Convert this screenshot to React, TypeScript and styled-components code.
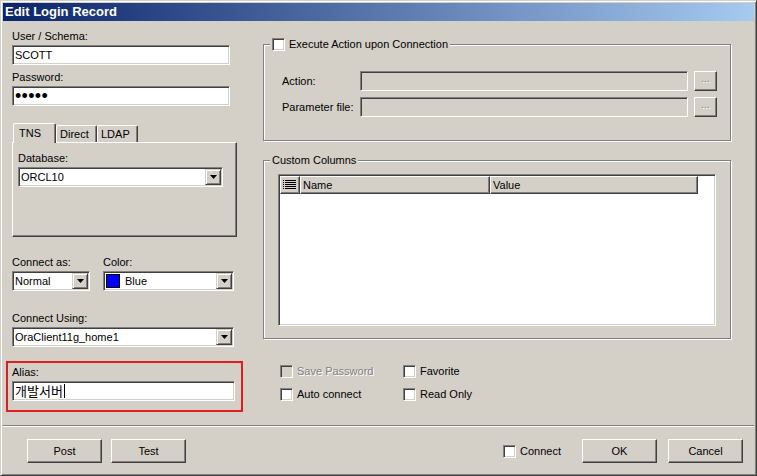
import React from "react";
import styled, { createGlobalStyle } from "styled-components";

const face = "#d4d0c8";
const shadow = "#808080";
const dark = "#404040";

const GlobalStyle = createGlobalStyle`
  html, body {
    margin: 0;
    padding: 0;
    background: ${face};
  }
  body {
    font-family: "Liberation Sans", Arial, sans-serif;
    font-size: 11px;
    color: #000;
  }
  * {
    box-sizing: border-box;
  }
`;

const Window = styled.div`
  width: 757px;
  height: 476px;
  background: ${face};
  border: 1px solid;
  border-color: ${face} ${dark} ${dark} ${face};
  box-shadow: inset 1px 1px #fff, inset -1px -1px ${shadow};
  padding: 2px;
  display: flex;
  flex-direction: column;
`;

const TitleBar = styled.div`
  height: 18px;
  padding-left: 2px;
  background: linear-gradient(90deg, #0a246a, #a6caf0);
  color: #fff;
  font-size: 13px;
  font-weight: bold;
  line-height: 18px;
`;

const Main = styled.div`
  flex: 1;
  display: flex;
`;

const LeftCol = styled.div`
  width: 260px;
  padding: 9px 0 0 9px;
  display: flex;
  flex-direction: column;
`;

const RightCol = styled.div`
  width: 468px;
  padding-top: 23px;
  display: flex;
  flex-direction: column;
`;

const Field = styled.div<{ $top?: number }>`
  margin-top: ${(p) => p.$top ?? 0}px;
  display: flex;
  flex-direction: column;
`;

const Label = styled.div`
  line-height: 13px;
  margin-bottom: 2px;
  white-space: nowrap;
`;

const Sunken = styled.div<{ $width?: number; $disabled?: boolean }>`
  width: ${(p) => (p.$width ? `${p.$width}px` : "auto")};
  height: 20px;
  background: ${(p) => (p.$disabled ? face : "#fff")};
  border: 1px solid;
  border-color: ${shadow} #fff #fff ${shadow};
  box-shadow: inset 1px 1px ${dark}, inset -1px -1px ${face};
  display: flex;
  align-items: center;
  padding: 0 2px;
  white-space: nowrap;
  overflow: hidden;
`;

const Input = styled(Sunken)`
  flex-shrink: 0;
`;

const Mask = styled.span`
  font-size: 18px;
  line-height: 16px;
  letter-spacing: 0.3px;
`;

const Hangul = styled.span`
  font-family: "Noto Sans CJK KR", "Liberation Sans", sans-serif;
  font-size: 13px;
  line-height: 16px;
`;

const Caret = styled.span`
  display: inline-block;
  width: 1px;
  height: 14px;
  margin-left: 1px;
  background: #000;
`;

const Combo = styled(Sunken)`
  padding: 0 1px 0 2px;
`;

const ComboText = styled.div`
  flex: 1;
  display: flex;
  align-items: center;
  line-height: 16px;
`;

const DropButton = styled.div`
  width: 16px;
  height: 16px;
  flex-shrink: 0;
  background: ${face};
  border: 1px solid;
  border-color: ${face} ${dark} ${dark} ${face};
  box-shadow: inset 1px 1px #fff, inset -1px -1px ${shadow};
  display: flex;
  align-items: center;
  justify-content: center;
`;

const Swatch = styled.span<{ $color: string }>`
  width: 14px;
  height: 14px;
  background: ${(p) => p.$color};
  border: 1px solid #000;
  margin-right: 5px;
`;

const Row = styled.div<{ $gap?: number }>`
  display: flex;
  gap: ${(p) => p.$gap ?? 0}px;
`;

const TabStrip = styled.div`
  margin-top: 17px;
  display: flex;
  align-items: flex-end;
  padding-left: 1px;
`;

const Tab = styled.div<{ $active?: boolean; $width: number }>`
  width: ${(p) => p.$width}px;
  height: ${(p) => (p.$active ? 20 : 17)}px;
  margin-bottom: ${(p) => (p.$active ? -1 : 0)}px;
  position: relative;
  z-index: ${(p) => (p.$active ? 1 : 0)};
  background: ${face};
  border: 1px solid;
  border-bottom: none;
  border-color: #fff ${dark} transparent #fff;
  border-radius: 2px 2px 0 0;
  box-shadow: inset -1px 0 ${shadow};
  padding: ${(p) => (p.$active ? "3px 0 0 5px" : "2px 0 0 3px")};
  line-height: 13px;
`;

const TabPanel = styled.div`
  width: 225px;
  height: 95px;
  border: 1px solid;
  border-color: #fff ${dark} ${dark} #fff;
  box-shadow: inset -1px -1px ${shadow};
  padding: 9px 0 0 5px;
`;

const Highlight = styled.div`
  margin: 14px 0 0 -6px;
  width: 237px;
  border: 2px solid #e01e1e;
  padding: 3px 0 9px 4px;
`;

const GroupBox = styled.div<{ $height: number; $top?: number }>`
  position: relative;
  height: ${(p) => p.$height}px;
  margin-top: ${(p) => p.$top ?? 0}px;
  border: 1px solid ${shadow};
  box-shadow: inset 1px 1px #fff, 1px 1px #fff;
`;

const Legend = styled.div`
  position: absolute;
  top: -7px;
  left: 6px;
  padding: 0 2px;
  background: ${face};
  display: flex;
  align-items: center;
  gap: 4px;
  line-height: 13px;
`;

const ActionRows = styled.div`
  padding: 26px 13px 0 18px;
  display: flex;
  flex-direction: column;
  gap: 6px;
`;

const RowLabel = styled.div`
  width: 78px;
  line-height: 20px;
`;

const SmallButton = styled.div`
  width: 23px;
  height: 20px;
  margin-left: 6px;
  border: 1px solid;
  border-color: #fff ${dark} ${dark} #fff;
  box-shadow: inset -1px -1px ${shadow};
  color: ${shadow};
  text-shadow: 1px 1px #fff;
  text-align: center;
  line-height: 14px;
  font-size: 10px;
`;

const ListArea = styled.div`
  margin: 13px 0 0 14px;
  width: 438px;
  height: 152px;
  background: #fff;
  border: 1px solid;
  border-color: ${shadow} #fff #fff ${shadow};
  box-shadow: inset 1px 1px ${dark}, inset -1px -1px ${face};
  padding: 1px 0 0 1px;
`;

const Header = styled.div`
  display: flex;
`;

const HeaderCell = styled.div<{ $width: number }>`
  width: ${(p) => p.$width}px;
  height: 18px;
  background: ${face};
  border: 1px solid;
  border-color: #fff ${dark} ${dark} #fff;
  box-shadow: inset -1px -1px ${shadow};
  padding-left: 2px;
  line-height: 15px;
  display: flex;
  align-items: center;
`;

const Checks = styled.div`
  margin-top: 26px;
  padding-left: 17px;
  display: grid;
  grid-template-columns: 123px auto;
  row-gap: 10px;
`;

const CheckRow = styled.label<{ $disabled?: boolean }>`
  display: flex;
  align-items: center;
  gap: 4px;
  line-height: 13px;
  color: ${(p) => (p.$disabled ? shadow : "#000")};
  text-shadow: ${(p) => (p.$disabled ? "1px 1px #fff" : "none")};
`;

const Box = styled.span<{ $disabled?: boolean }>`
  width: 13px;
  height: 13px;
  flex-shrink: 0;
  background: ${(p) => (p.$disabled ? face : "#fff")};
  border: 1px solid;
  border-color: ${shadow} #fff #fff ${shadow};
  box-shadow: inset 1px 1px ${dark}, inset -1px -1px ${face};
`;

const Footer = styled.div`
  height: 48px;
  border-top: 1px solid ${shadow};
  box-shadow: inset 0 1px #fff;
  padding: 13px 11px 0 24px;
  display: flex;
  align-items: flex-start;
`;

const Button = styled.button<{ $gapRight?: number }>`
  width: 75px;
  height: 24px;
  margin-right: ${(p) => p.$gapRight ?? 0}px;
  background: ${face};
  border: 1px solid;
  border-color: #fff ${dark} ${dark} #fff;
  box-shadow: inset -1px -1px ${shadow};
  font-family: inherit;
  font-size: 11px;
  color: #000;
  padding: 0;
`;

const Spacer = styled.div`
  flex: 1;
`;

const FooterCheck = styled(CheckRow)`
  margin-top: 6px;
  margin-right: 21px;
`;

const Arrow = () => (
  <svg width="7" height="4" viewBox="0 0 7 4">
    <polygon points="0,0 7,0 3.5,4" fill="#000" />
  </svg>
);

const ListIcon = () => (
  <svg width="13" height="10" viewBox="0 0 13 10">
    {[0, 2, 4, 6, 8].map((y) => (
      <g key={y}>
        <rect x="0" y={y} width="1" height="1" fill="#000" />
        <rect x="2" y={y} width="11" height="1" fill="#000" />
      </g>
    ))}
  </svg>
);

const ComboBox: React.FC<{ width: number; children: React.ReactNode }> = ({ width, children }) => (
  <Combo $width={width}>
    <ComboText>{children}</ComboText>
    <DropButton>
      <Arrow />
    </DropButton>
  </Combo>
);

export default function App() {
  return (
    <>
      <GlobalStyle />
      <Window>
        <TitleBar>Edit Login Record</TitleBar>
        <Main>
          <LeftCol>
            <Field>
              <Label>User / Schema:</Label>
              <Input $width={218}>SCOTT</Input>
            </Field>
            <Field $top={6}>
              <Label>Password:</Label>
              <Input $width={218}>
                <Mask>•••••</Mask>
              </Input>
            </Field>

            <TabStrip>
              <Tab $active $width={43}>TNS</Tab>
              <Tab $width={41}>Direct</Tab>
              <Tab $width={41}>LDAP</Tab>
            </TabStrip>
            <TabPanel>
              <Label>Database:</Label>
              <Field $top={1}>
                <ComboBox width={205}>ORCL10</ComboBox>
              </Field>
            </TabPanel>

            <Row $gap={13}>
              <Field $top={19}>
                <Label>Connect as:</Label>
                <ComboBox width={78}>Normal</ComboBox>
              </Field>
              <Field $top={19}>
                <Label>Color:</Label>
                <ComboBox width={131}>
                  <Swatch $color="#0000ff" />
                  Blue
                </ComboBox>
              </Field>
            </Row>

            <Field $top={21}>
              <Label>Connect Using:</Label>
              <ComboBox width={222}>OraClient11g_home1</ComboBox>
            </Field>

            <Highlight>
              <Label>Alias:</Label>
              <Input $width={223}>
                <Hangul>개발서버</Hangul>
                <Caret />
              </Input>
            </Highlight>
          </LeftCol>

          <RightCol>
            <GroupBox $height={97}>
              <Legend>
                <Box />
                Execute Action upon Connection
              </Legend>
              <ActionRows>
                <Row>
                  <RowLabel>Action:</RowLabel>
                  <Input $width={328} $disabled />
                  <SmallButton>...</SmallButton>
                </Row>
                <Row>
                  <RowLabel>Parameter file:</RowLabel>
                  <Input $width={328} $disabled />
                  <SmallButton>...</SmallButton>
                </Row>
              </ActionRows>
            </GroupBox>

            <GroupBox $height={179} $top={19}>
              <Legend>Custom Columns</Legend>
              <ListArea>
                <Header>
                  <HeaderCell $width={20}>
                    <ListIcon />
                  </HeaderCell>
                  <HeaderCell $width={190}>Name</HeaderCell>
                  <HeaderCell $width={208}>Value</HeaderCell>
                </Header>
              </ListArea>
            </GroupBox>

            <Checks>
              <CheckRow $disabled>
                <Box $disabled />
                Save Password
              </CheckRow>
              <CheckRow>
                <Box />
                Favorite
              </CheckRow>
              <CheckRow>
                <Box />
                Auto connect
              </CheckRow>
              <CheckRow>
                <Box />
                Read Only
              </CheckRow>
            </Checks>
          </RightCol>
        </Main>

        <Footer>
          <Button $gapRight={9}>Post</Button>
          <Button>Test</Button>
          <Spacer />
          <FooterCheck>
            <Box />
            Connect
          </FooterCheck>
          <Button $gapRight={11}>OK</Button>
          <Button>Cancel</Button>
        </Footer>
      </Window>
    </>
  );
}
